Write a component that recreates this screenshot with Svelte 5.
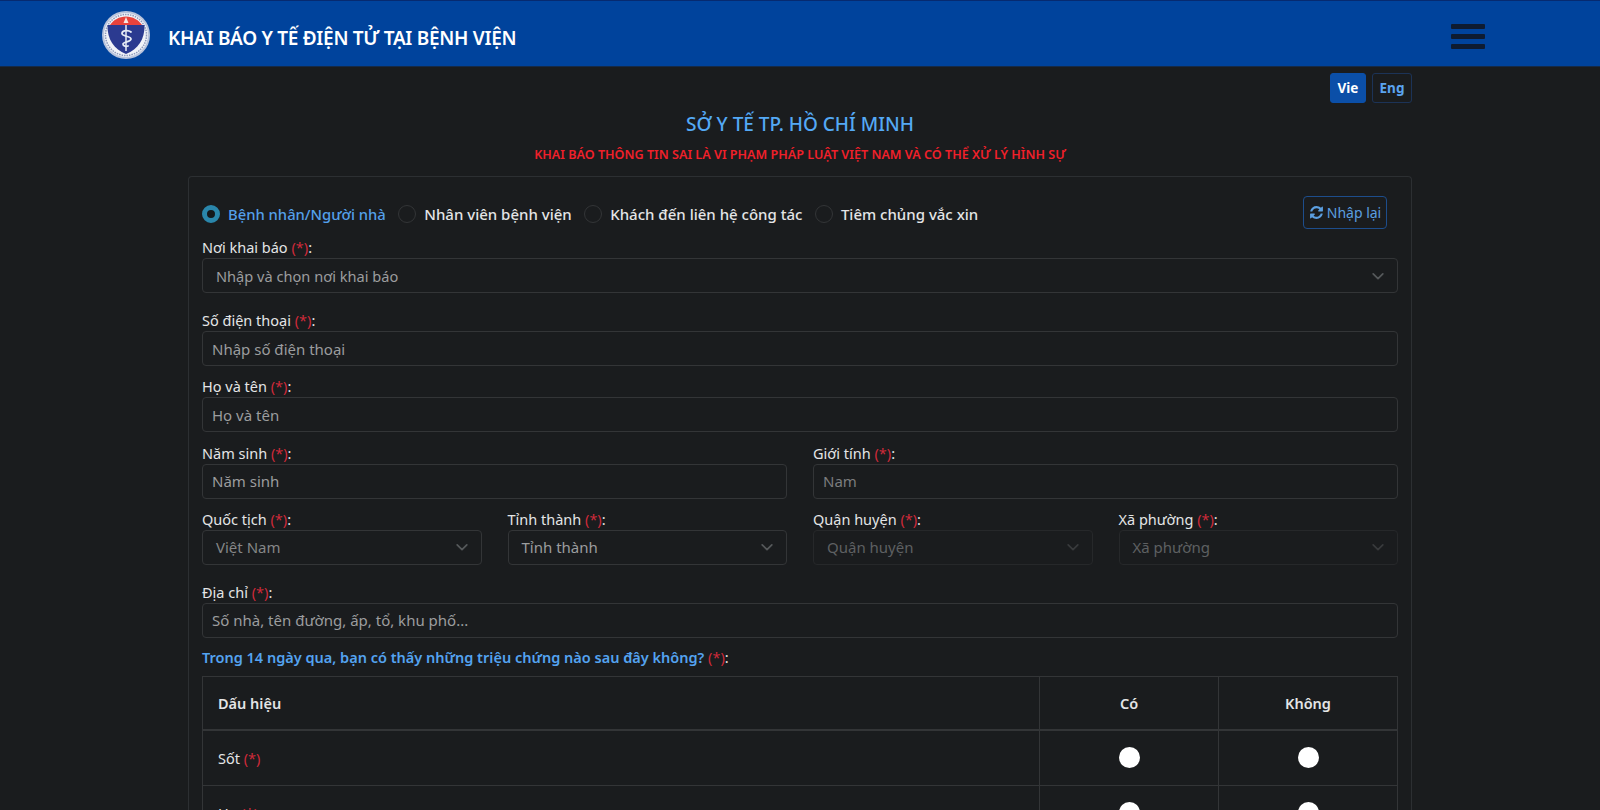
<script>
	const roles = ['Bệnh nhân/Người nhà', 'Nhân viên bệnh viện', 'Khách đến liên hệ công tác', 'Tiêm chủng vắc xin'];
	const symptoms = ['Sốt', 'Ho', 'Khó thở', 'Đau họng'];
</script>

{#snippet label(text)}
	<div class="lbl">{text} <span class="req">(*)</span>:</div>
{/snippet}

{#snippet pick(text, tone = '')}
	<div class="select {tone}">
		<span>{text}</span>
		<svg viewBox="0 0 16 16" width="14" height="14"><path d="M2.500 5.500 8 11l5.500-5.500" fill="none" stroke="currentColor" stroke-width="2" stroke-linecap="round" stroke-linejoin="round" /></svg>
	</div>
{/snippet}

<header class="top">
	<div class="brand">
		<svg class="logo" viewBox="0 0 48 48" width="48" height="48">
			<circle cx="24" cy="24" r="24" fill="#b9c4dc" />
			<circle cx="24" cy="24" r="22" fill="#f1f3f8" />
			<circle cx="24" cy="24" r="20.500" fill="none" stroke="#8e9abb" stroke-width="1.500" stroke-dasharray="1.500 1" />
			<path d="M8 14C11.500 9 17 5.500 24 5.500S36.500 9 40 14Z" fill="#e8423c" />
			<path d="M21.500 12 24 6l2.500 6Z" fill="#f8e6e2" />
			<path d="M5.500 14h37C43 28 36 38.500 24 43 12 38.500 5 28 5.500 14Z" fill="#2b3a90" />
			<path d="M24 14v26" stroke="#e6ebf5" stroke-width="1.500" />
			<path d="M29 21c-3-2.500-9-1.500-9 1.500s9 2.500 9 5.500-8 2.500-8 5 3.500 2.500 5 2" fill="none" stroke="#e6ebf5" stroke-width="1.800" stroke-linecap="round" />
		</svg>
		<span class="title">KHAI BÁO Y TẾ ĐIỆN TỬ TẠI BỆNH VIỆN</span>
	</div>
	<button class="burger" aria-label="Menu"><i></i><i></i><i></i></button>
</header>

<main class="wrap">
	<div class="langs">
		<button class="lang on">Vie</button>
		<button class="lang">Eng</button>
	</div>
	<h1>SỞ Y TẾ TP. HỒ CHÍ MINH</h1>
	<p class="warn">KHAI BÁO THÔNG TIN SAI LÀ VI PHẠM PHÁP LUẬT VIỆT NAM VÀ CÓ THỂ XỬ LÝ HÌNH SỰ</p>

	<section class="card">
		<div class="roles">
			{#each roles as r, i}
				<div class="role" class:sel={i === 0}><span class="dot"></span>{r}</div>
			{/each}
			<button class="reset">
				<svg viewBox="0 0 1792 1792" width="15" height="15"><path fill="currentColor" d="M1639 1056q0 5-1 7-64 268-268 434.500t-478 166.500q-146 0-282.500-55t-243.500-157l-129 129q-19 19-45 19t-45-19-19-45v-448q0-26 19-45t45-19h448q26 0 45 19t19 45-19 45l-137 137q71 66 161 102t187 36q134 0 250-65t186-179q11-17 53-117 8-23 30-23h192q13 0 22.500 9.500t9.500 22.500zm25-800v448q0 26-19 45t-45 19h-448q-26 0-45-19t-19-45 19-45l138-138q-148-137-349-137-134 0-250 65t-186 179q-11 17-53 117-8 23-30 23h-199q-13 0-22.500-9.500t-9.500-22.500v-7q65-268 270-434.500t480-166.500q146 0 284 55.500t245 156.500l130-129q19-19 45-19t45 19 19 45z" /></svg>
				Nhập lại
			</button>
		</div>

		<div class="field f1">
			{@render label('Nơi khai báo')}
			{@render pick('Nhập và chọn nơi khai báo', 'narrow')}
		</div>
		<div class="field f2">
			{@render label('Số điện thoại')}
			<input placeholder="Nhập số điện thoại" />
		</div>
		<div class="field f3">
			{@render label('Họ và tên')}
			<input placeholder="Họ và tên" />
		</div>
		<div class="grid two f3">
			<div>
				{@render label('Năm sinh')}
				<input placeholder="Năm sinh" />
			</div>
			<div>
				{@render label('Giới tính')}
				<input class="dim" placeholder="Nam" />
			</div>
		</div>
		<div class="grid four f3">
			<div>
				{@render label('Quốc tịch')}
				{@render pick('Việt Nam', 'dim')}
			</div>
			<div>
				{@render label('Tỉnh thành')}
				{@render pick('Tỉnh thành')}
			</div>
			<div>
				{@render label('Quận huyện')}
				{@render pick('Quận huyện', 'off')}
			</div>
			<div>
				{@render label('Xã phường')}
				{@render pick('Xã phường', 'off')}
			</div>
		</div>
		<div class="field f2">
			{@render label('Địa chỉ')}
			<input placeholder="Số nhà, tên đường, ấp, tổ, khu phố..." />
		</div>

		<div class="ask">Trong 14 ngày qua, bạn có thấy những triệu chứng nào sau đây không? <span class="req">(*)</span><span class="colon">:</span></div>

		<table>
			<thead>
				<tr><th class="name">Dấu hiệu</th><th>Có</th><th>Không</th></tr>
			</thead>
			<tbody>
				{#each symptoms as s}
					<tr>
						<td class="name">{s} <span class="req">(*)</span></td>
						<td><span class="opt"></span></td>
						<td><span class="opt"></span></td>
					</tr>
				{/each}
			</tbody>
		</table>
	</section>
</main>

<style>
	:global(body) { background: #1a1c1e; height: 810px; overflow: hidden; font-family: "Noto Sans", "Open Sans", sans-serif; color: #e4e5e6; font-size: 15px; }
	.top { height: 67px; box-sizing: border-box; background: #00439c; border-top: 1px solid #062a70; border-bottom: 1px solid #152a48; display: flex; align-items: center; justify-content: space-between; padding: 5px 115px 0 102px; }
	.brand { display: flex; align-items: center; gap: 18px; }
	.logo { display: block; margin-top: -3px; }
	.title { color: #fff; font-size: 19px; font-weight: 600; letter-spacing: -0.3px; margin-top: 4px; }
	.burger { background: none; border: 0; padding: 0; width: 34px; display: flex; flex-direction: column; gap: 5px; }
	.burger i { display: block; height: 5px; border-radius: 1px; background: #0e1b30; }

	.wrap { width: 1224px; margin: 0 auto; }
	.langs { display: flex; justify-content: flex-end; gap: 6px; padding-top: 6px; }
	.lang { height: 30px; width: 40px; font: 700 13.5px "Noto Sans", sans-serif; color: #5ba4f0; background: transparent; border: 1px solid #1c3357; border-radius: 3px; padding: 0; }
	.lang.on { width: 36px; background: #0b4fa8; border-color: #0b4fa8; color: #fff; }
	h1 { margin: 8px 0 0; text-align: center; font-size: 19px; line-height: 26px; font-weight: 500; color: #54a9f5; }
	.warn { margin: 9px 0 0; text-align: center; font-size: 12.6px; line-height: 18px; font-weight: 600; color: #f0202a; }

	.card { margin-top: 12px; border: 1px solid #2c2f32; border-radius: 4px; border-bottom: 0; padding: 19px 13px 0; height: 700px; box-sizing: border-box; }
	.roles { display: flex; align-items: center; gap: 12.500px; height: 33px; font-size: 15px; font-weight: 500; }
	.role { display: flex; align-items: center; gap: 8px; margin-top: 2px; }
	.role.sel { color: #54a0ea; font-size: 14.8px; }
	.dot { width: 18px; height: 18px; box-sizing: border-box; border-radius: 50%; border: 1px solid #333537; background: #1a1c1e; }
	.sel .dot { border: 5px solid #2a86ab; background: #14181b; }
	.reset { margin-left: auto; margin-right: 11px; height: 33px; width: 84px; box-sizing: border-box; display: flex; align-items: center; justify-content: center; gap: 3px; padding: 0; font: 400 14px "Noto Sans", sans-serif; color: #5c9fe0; background: transparent; border: 1px solid #1d4d8c; border-radius: 4px; }

	.lbl { font-size: 14.5px; line-height: 20px; margin-bottom: 1px; }
	.req { color: #cf2a3a; }
	.f1 { margin-top: 8px; }
	.f2 { margin-top: 17px; }
	.f3 { margin-top: 10.3px; }
	input, .select { display: flex; align-items: center; width: 100%; height: 35px; box-sizing: border-box; background: #1a1c1e; border: 1px solid #333537; border-radius: 4px; font: 400 15px "Noto Sans", sans-serif; color: #9c9d9e; outline: none; }
	input { padding: 0 9px; }
	input::placeholder { color: #9c9d9e; opacity: 1; }
	input.dim::placeholder { color: #7c7d7e; }
	.select { justify-content: space-between; padding: 0 12px 0 13px; }
	.select svg { color: #55585a; }
	.select.narrow span { font-size: 14.6px; }
	.select.dim { color: #858687; }
	.select.off { color: #5e6062; border-color: #26282a; }
	.select.off svg { color: #383a3c; }
	.grid { display: grid; column-gap: 26px; }
	.two { grid-template-columns: 1fr 1fr; }
	.four { grid-template-columns: repeat(4, 1fr); }

	.ask { margin-top: 9px; height: 20px; line-height: 20px; font-size: 14.5px; font-weight: 600; color: #54a3f0; }
	.ask .req { font-weight: 400; }
	.colon { color: #e4e5e6; font-weight: 400; }

	table { margin-top: 9px; width: 100%; border-collapse: collapse; table-layout: fixed; }
	th, td { border: 1px solid #333537; text-align: center; padding: 0; font-size: 14.5px; }
	th { height: 52px; font-weight: 600; }
	td { height: 54px; }
	thead th { border-bottom-width: 2px; }
	th:nth-child(2), th:nth-child(3) { width: 178px; }
	.name { text-align: left; padding-left: 15px; font-weight: 400; }
	th.name { font-weight: 600; }
	.opt { display: block; width: 21px; height: 21px; margin: 0 auto 1px; border-radius: 50%; background: #fff; }
</style>
